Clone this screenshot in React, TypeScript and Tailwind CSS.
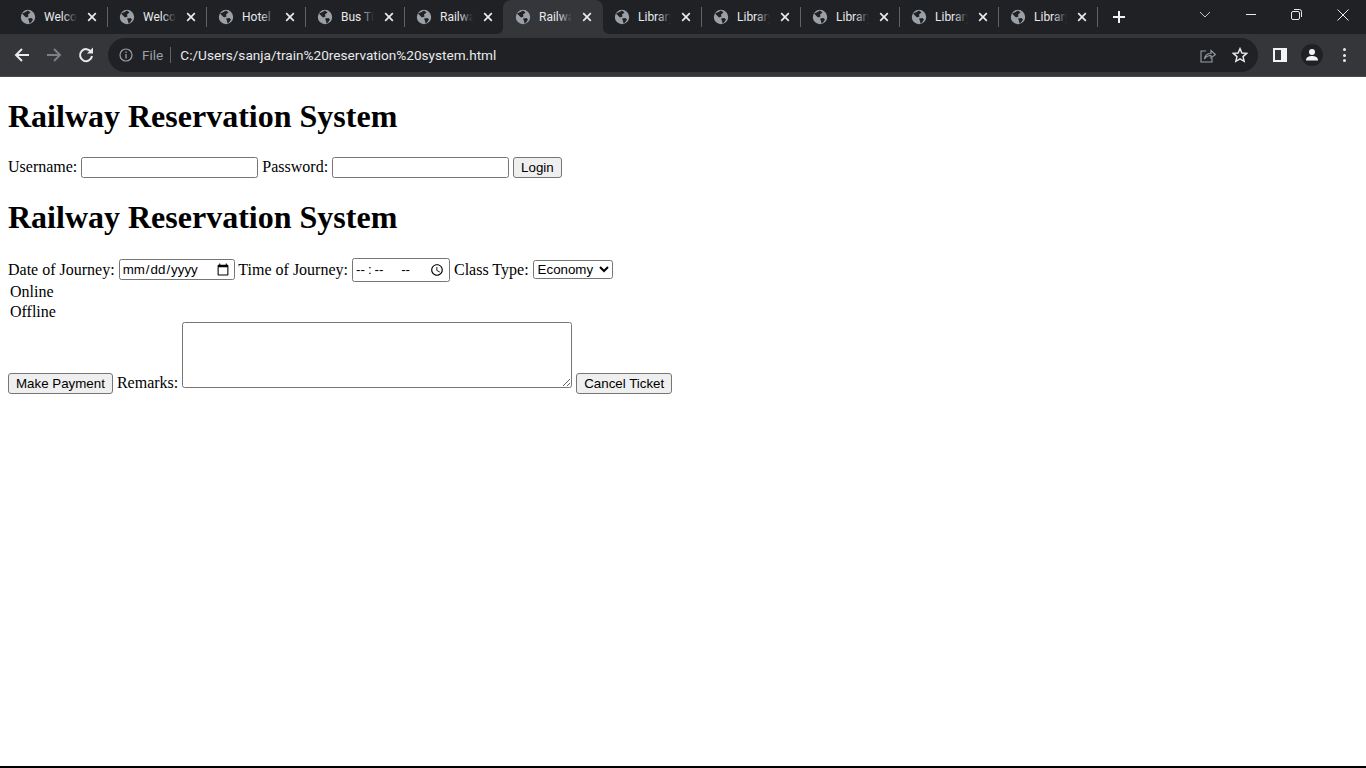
const tabs = ["Welcome", "Welcome", "Hotel", "Bus Ticket", "Railway", "Railway", "Library", "Library", "Library", "Library", "Library"];
const ACTIVE = 5;

const Globe = () => (
  <svg width="16" height="16" viewBox="0 0 16 16" className="shrink-0">
    <circle cx="8" cy="8" r="7.2" fill="#9aa0a6" />
    <path d="M2 4.5 L5.5 3 L8 1.5 L10.5 3.5 L8 5.5 L8.5 7.5 L6 8.5 L4.5 7 Z" fill="#202124" />
    <path d="M8 9.5 L11.5 9 L13 10.5 L11 13.5 L9.5 14.5 L9 12 Z" fill="#202124" />
  </svg>
);

const CloseIcon = () => (
  <svg width="10" height="10" viewBox="0 0 10 10" className="shrink-0">
    <path d="M1.2 1.2 L8.8 8.8 M8.8 1.2 L1.2 8.8" stroke="#e8eaed" strokeWidth="1.7" />
  </svg>
);

const Tab = ({ title, index }: { title: string; index: number }) => {
  const active = index === ACTIVE;
  const noSep = index === ACTIVE || index === ACTIVE - 1;
  return (
    <div className={`relative flex items-center h-[34px] pl-[12px] shrink-0 ${active ? "w-[100px] -mr-[1px] bg-[#35363a] rounded-t-[8px]" : "w-[99px]"}`}>
      <Globe />
      <div className="relative w-[33px] ml-[8px] overflow-hidden whitespace-nowrap text-[12px] text-[#e8eaed] font-['Roboto',sans-serif]">
        {title}
        <div className={`absolute right-0 top-0 bottom-0 w-[14px] bg-gradient-to-r from-transparent ${active ? "to-[#35363a]" : "to-[#202124]"}`} />
      </div>
      <div className="ml-[10px]"><CloseIcon /></div>
      {!noSep && <div className="absolute right-[-1px] top-[7px] h-[20px] w-px bg-[#5f6368]" />}
      {active && (
        <>
          <svg width="6" height="6" viewBox="0 0 6 6" className="absolute left-[-6px] bottom-0">
            <path d="M6 0 V6 H0 A6 6 0 0 0 6 0 Z" fill="#35363a" />
          </svg>
          <svg width="6" height="6" viewBox="0 0 6 6" className="absolute right-[-6px] bottom-0">
            <path d="M0 0 V6 H6 A6 6 0 0 1 0 0 Z" fill="#35363a" />
          </svg>
        </>
      )}
    </div>
  );
};

const TitleBar = () => (
  <div className="flex items-center h-[34px] bg-[#202124] pl-[8px]">
    {tabs.map((t, i) => <Tab key={i} title={t} index={i} />)}
    <svg width="14" height="14" viewBox="0 0 14 14" className="ml-[15px]">
      <path d="M7 1 V13 M1 7 H13" stroke="#f1f3f4" strokeWidth="2" />
    </svg>
    <div className="flex items-center ml-auto h-full">
      <svg width="12" height="8" viewBox="0 0 12 8" className="mr-[35px] -mt-[4px]">
        <path d="M1 1 L6 6 L11 1" fill="none" stroke="#c4c7ca" strokeWidth="1" />
      </svg>
      <div className="w-[10px] h-px bg-[#e8eaed] mr-[35px] -mt-[5px]" />
      <svg width="11" height="11" viewBox="0 0 11 11" className="mr-[35px] -mt-[5px]">
        <rect x="0.5" y="2.5" width="8" height="8" rx="1.5" fill="none" stroke="#e8eaed" />
        <path d="M3 0.5 H8.5 A2 2 0 0 1 10.5 2.5 V8" fill="none" stroke="#e8eaed" />
      </svg>
      <svg width="12" height="12" viewBox="0 0 12 12" className="mr-[17px] -mt-[5px]">
        <path d="M0.5 0.5 L11.5 11.5 M11.5 0.5 L0.5 11.5" stroke="#e8eaed" strokeWidth="1" />
      </svg>
    </div>
  </div>
);

const ToolBar = () => (
  <div className="flex items-center h-[42px] bg-[#35363a] border-b border-[#4a4b4f] box-content">
    <svg width="16" height="16" viewBox="0 0 16 16" className="ml-[14px]">
      <path d="M15 8 H2 M8 2 L2 8 L8 14" fill="none" stroke="#e8eaed" strokeWidth="2" />
    </svg>
    <svg width="16" height="16" viewBox="0 0 16 16" className="ml-[16px]">
      <path d="M1 8 H14 M8 2 L14 8 L8 14" fill="none" stroke="#7c7f84" strokeWidth="2" />
    </svg>
    <svg width="16" height="16" viewBox="0 0 16 16" className="ml-[16px]">
      <path d="M13.2 5 A6 6 0 1 0 14 9" fill="none" stroke="#e8eaed" strokeWidth="2" />
      <path d="M9 6.5 H15 V0.5 Z" fill="#e8eaed" />
    </svg>
    <div className="flex items-center ml-[14px] h-[34px] w-[1150px] rounded-full bg-[#202124]">
      <svg width="14" height="14" viewBox="0 0 14 14" className="ml-[11px]">
        <circle cx="7" cy="7" r="6" fill="none" stroke="#9aa0a6" strokeWidth="1.2" />
        <path d="M7 6 V10.5 M7 3.5 V5" stroke="#9aa0a6" strokeWidth="1.3" />
      </svg>
      <span className="ml-[9px] text-[13.6px] text-[#9aa0a6] font-['Roboto',sans-serif]">File</span>
      <div className="ml-[7px] w-px h-[16px] bg-[#5f6368]" />
      <span className="ml-[9px] text-[13.6px] text-[#e8eaed] font-['Roboto',sans-serif]">C:/Users/sanja/train%20reservation%20system.html</span>
      <div className="flex items-center ml-auto">
        <svg width="16" height="15" viewBox="0 0 16 15" className="mr-[16px]">
          <path d="M6 3 H1 V14 H12 V10" fill="none" stroke="#9aa0a6" strokeWidth="1.1" />
          <path d="M4.5 11 C5 7 8 5.5 11 5.5 V2.5 L15.5 6.5 L11 10 V7.5 C8.5 7.5 6 8.5 4.5 11 Z" fill="none" stroke="#9aa0a6" strokeWidth="1.1" />
        </svg>
        <svg width="16" height="16" viewBox="0 0 16 16" className="mr-[10px]">
          <path d="M8 1.6 L9.9 6 L14.7 6.4 L11 9.6 L12.2 14.3 L8 11.8 L3.8 14.3 L5 9.6 L1.3 6.4 L6.1 6 Z" fill="none" stroke="#e8eaed" strokeWidth="1.4" />
        </svg>
      </div>
    </div>
    <div className="ml-[15px] flex w-[14px] h-[14px] border-[2px] border-[#f1f3f4] box-border">
      <div className="ml-auto w-[4px] h-full bg-[#f1f3f4]" />
    </div>
    <div className="ml-[14px] flex items-center justify-center w-[22px] h-[22px] rounded-full bg-[#202124]">
      <svg width="14" height="14" viewBox="0 0 14 14">
        <circle cx="7" cy="4" r="3" fill="#f1f3f4" />
        <path d="M1 12.5 C1 9 4 8 7 8 C10 8 13 9 13 12.5 Z" fill="#f1f3f4" />
      </svg>
    </div>
    <div className="ml-[20px] flex flex-col gap-[2.5px]">
      <div className="w-[3px] h-[3px] rounded-full bg-[#e8eaed]" />
      <div className="w-[3px] h-[3px] rounded-full bg-[#e8eaed]" />
      <div className="w-[3px] h-[3px] rounded-full bg-[#e8eaed]" />
    </div>
  </div>
);

const inputCls = "border border-[#767676] rounded-[2.5px] bg-white px-[2px] py-[1px] leading-[15px] text-[13.3333px] text-black font-['Liberation_Sans',sans-serif]";
const btnCls = "h-[21px] border border-[#767676] rounded-[3px] bg-[#efefef] px-[7px] py-[1px] leading-[15px] text-[13.3333px] text-black font-['Liberation_Sans',sans-serif]";
const timeFields = "[&::-webkit-datetime-edit-hour-field]:tracking-[3px] [&::-webkit-datetime-edit-minute-field]:tracking-[3px] [&::-webkit-datetime-edit-ampm-field]:tracking-[3px] [&::-webkit-datetime-edit-text]:px-[2px] [&::-webkit-datetime-edit-ampm-field]:ml-[9px]";

export default function App() {
  return (
    <div className="relative h-[768px] overflow-hidden bg-white border-b-[2px] border-black box-border">
      <TitleBar />
      <ToolBar />
      <div className="p-[8px] pt-0 text-[16px] leading-[18px] text-black font-['Liberation_Serif',serif]">
        <h1 className="my-[21.44px] text-[32px] leading-[37px] font-bold">Railway Reservation System</h1>
        <div>
          Username: <input type="text" className={`${inputCls} w-[177px] h-[21px]`} /> Password: <input type="password" className={`${inputCls} w-[177px] h-[21px]`} /> <button className={btnCls}>Login</button>
        </div>
        <h1 className="my-[21.44px] text-[32px] leading-[37px] font-bold">Railway Reservation System</h1>
        <div>
          Date of Journey: <input type="date" className={`${inputCls} w-[116px] h-[21px] align-[1px]`} /> Time of Journey: <input type="time" className={`${inputCls} ${timeFields} w-[98px] h-[24px] align-[1px]`} /> Class Type:{" "}
          <select className="w-[80px] h-[19px] border border-[#767676] rounded-[2.5px] bg-white leading-[15px] text-[13.3333px] font-['Liberation_Sans',sans-serif] appearance-auto align-[1px]">
            <option>Economy</option>
          </select>
        </div>
        <div className="pl-[2px] mt-[1px]">Online</div>
        <div className="pl-[2px] mt-[2px]">Offline</div>
        <div className="mt-[1px]">
          <button className={btnCls}>Make Payment</button> Remarks:{" "}
          <textarea className={`${inputCls} w-[390px] h-[66px] align-baseline`} /> <button className={btnCls}>Cancel Ticket</button>
        </div>
      </div>
    </div>
  );
}
